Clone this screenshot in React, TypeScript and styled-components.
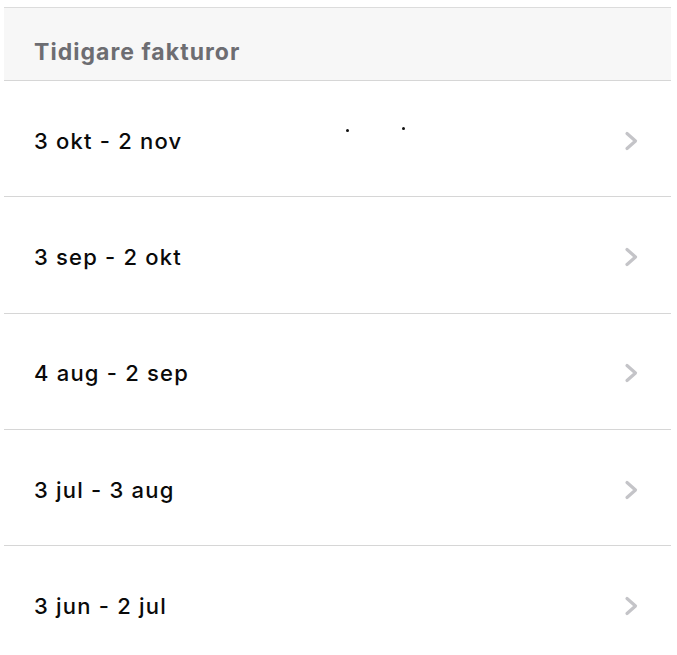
import React from "react";
import styled, { createGlobalStyle } from "styled-components";

const Global = createGlobalStyle`
  html, body { margin: 0; padding: 0; background: #ffffff; }
  body { font-family: Inter, "Noto Sans", "Liberation Sans", sans-serif; -webkit-font-smoothing: antialiased; }
`;

const Page = styled.div`
  padding: 7px 6px 0 4px;
  width: 667px;
`;

const List = styled.section`
  display: flex;
  flex-direction: column;
  border-top: 1px solid #dcdcdc;
`;

const Header = styled.header`
  display: flex;
  align-items: flex-end;
  height: 73px;
  box-sizing: border-box;
  padding: 0 0 14px 30px;
  background: #f7f7f7;
  border-bottom: 1px solid #d6d6d6;
`;

const HeaderTitle = styled.h2`
  margin: 0;
  font-size: 23px;
  line-height: 28px;
  font-weight: 650;
  color: #6d6d72;
  letter-spacing: 1.05px;
`;

const Row = styled.div<{ $last?: boolean }>`
  position: relative;
  display: flex;
  align-items: center;
  justify-content: space-between;
  height: 116.33px;
  box-sizing: border-box;
  padding: 4px 32px 0 30px;
  border-bottom: ${(p) => (p.$last ? "none" : "1px solid #d6d6d6")};
`;

const Label = styled.span`
  font-size: 22px;
  font-weight: 550;
  color: #0a0a0a;
  letter-spacing: 1.2px;
`;

const Chevron = styled.svg`
  width: 16px;
  height: 22px;
  flex: none;
`;

const Dot = styled.span<{ $x: number; $y: number }>`
  position: absolute;
  left: ${(p) => p.$x}px;
  top: ${(p) => p.$y}px;
  width: 3px;
  height: 3px;
  border-radius: 50%;
  background: #111;
`;

const periods = ["3 okt - 2 nov", "3 sep - 2 okt", "4 aug - 2 sep", "3 jul - 3 aug", "3 jun - 2 jul"];

export default function App() {
  return (
    <>
      <Global />
      <Page>
        <List>
          <Header>
            <HeaderTitle>Tidigare fakturor</HeaderTitle>
          </Header>
          {periods.map((p, i) => (
            <Row key={p} $last={i === periods.length - 1}>
              <Label>{p}</Label>
              {i === 0 && (
                <>
                  <Dot $x={342} $y={48} />
                  <Dot $x={398} $y={46} />
                </>
              )}
              <Chevron viewBox="0 0 16 22">
                <polyline
                  points="4,3.5 12.5,11 4,18.5"
                  fill="none"
                  stroke="#c4c4c8"
                  strokeWidth="3.2"
                  strokeLinecap="round"
                  strokeLinejoin="round"
                />
              </Chevron>
            </Row>
          ))}
        </List>
      </Page>
    </>
  );
}
